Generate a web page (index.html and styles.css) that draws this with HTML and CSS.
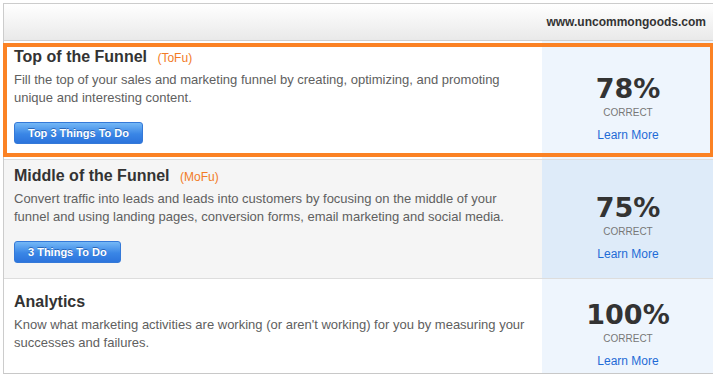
FILE: index.html
```html
<!DOCTYPE html>
<html>
    <head>
        <meta charset="UTF-8">
        <title>Inbound Marketing Grader</title>
        <link rel="stylesheet" href="styles.css">
    </head>

    <body>
        <div class="report">
            <div class="report-header">www.uncommongoods.com</div>

            <div class="stage-row highlighted">
                <div class="stage-info">
                    <h2 class="stage-title">Top of the Funnel <span class="stage-tag">(ToFu)</span></h2>
                    <p class="stage-text">Fill the top of your sales and marketing funnel by creating, optimizing, and promoting unique and interesting content.</p>
                    <button class="todo-button">Top 3 Things To Do</button>
                </div>
                <div class="stage-score">
                    <div class="score-value">78%</div>
                    <div class="score-label">CORRECT</div>
                    <a class="learn-link" href="#">Learn More</a>
                </div>
            </div>

            <div class="stage-row shaded">
                <div class="stage-info">
                    <h2 class="stage-title">Middle of the Funnel <span class="stage-tag">(MoFu)</span></h2>
                    <p class="stage-text">Convert traffic into leads and leads into customers by focusing on the middle of your funnel and using landing pages, conversion forms, email marketing and social media.</p>
                    <button class="todo-button">3 Things To Do</button>
                </div>
                <div class="stage-score">
                    <div class="score-value">75%</div>
                    <div class="score-label">CORRECT</div>
                    <a class="learn-link" href="#">Learn More</a>
                </div>
            </div>

            <div class="stage-row">
                <div class="stage-info">
                    <h2 class="stage-title">Analytics</h2>
                    <p class="stage-text">Know what marketing activities are working (or aren't working) for you by measuring your successes and failures.</p>
                </div>
                <div class="stage-score">
                    <div class="score-value">100%</div>
                    <div class="score-label">CORRECT</div>
                    <a class="learn-link" href="#">Learn More</a>
                </div>
            </div>
        </div>
    </body>
</html>
```

FILE: styles.css
```css
body {
    margin: 0;
    background-color: white;
    font-family: "Liberation Sans", Arial, sans-serif;
}

.report {
    margin: 3px 0 0 3px;
    width: 710px;
    border: 1px solid #cccccc;
    border-bottom-color: #c8c8c8;
}

.report-header {
    height: 36px;
    line-height: 36px;
    text-align: right;
    padding-right: 8px;
    font-size: 12px;
    font-weight: bold;
    color: #333333;
    background: linear-gradient(to bottom, #ffffff, #e9e9e9);
    border-bottom: 1px solid #cfcfcf;
}

.stage-row {
    display: grid;
    grid-template-columns: 538px 1fr;
    border-top: 1px solid #dddddd;
    background-color: white;
}

.report-header + .stage-row {
    border-top: none;
}

.stage-row.highlighted {
    position: relative;
}

.stage-row.highlighted::after {
    content: "";
    position: absolute;
    top: 2px;
    bottom: 2px;
    left: -1px;
    right: 0;
    border: 4px solid #fb8224;
    pointer-events: none;
}

.stage-row.shaded {
    background-color: #f5f5f5;
}

.stage-info {
    padding: 6px 10px 15px;
    align-self: center;
}

.stage-title {
    margin: 0;
    font-size: 16px;
    line-height: 20px;
    color: #333333;
}

.stage-tag {
    margin-left: 6px;
    font-size: 12px;
    line-height: 1;
    font-weight: normal;
    color: #f27b26;
}

.stage-text {
    margin: 4px 0 0;
    font-size: 13px;
    line-height: 18px;
    color: #606060;
}

.todo-button {
    display: block;
    margin-top: 15px;
    height: 22px;
    padding: 0 13px;
    font-family: "Liberation Sans", Arial, sans-serif;
    font-size: 11px;
    font-weight: bold;
    color: white;
    text-shadow: 0 -1px 0 rgba(0, 50, 130, 0.5);
    background: linear-gradient(to bottom, #74b8f6, #3a86e6 55%, #2c74dc);
    border: 1px solid #3479d8;
    border-radius: 3px;
    cursor: pointer;
}

.stage-score {
    display: flex;
    flex-direction: column;
    align-items: center;
    justify-content: center;
    min-height: 94px;
    box-sizing: border-box;
    padding-top: 14px;
    background-color: #eef5fd;
}

.stage-row.shaded .stage-score {
    background-color: #deebf9;
}

.score-value {
    font-family: "DejaVu Sans", sans-serif;
    font-size: 27px;
    font-weight: bold;
    line-height: 34px;
    color: #333333;
}

.score-label {
    font-size: 10px;
    line-height: 14px;
    color: #777777;
}

.learn-link {
    margin-top: 7px;
    font-size: 12px;
    line-height: 16px;
    color: #1f6bd6;
    text-decoration: none;
}
```
